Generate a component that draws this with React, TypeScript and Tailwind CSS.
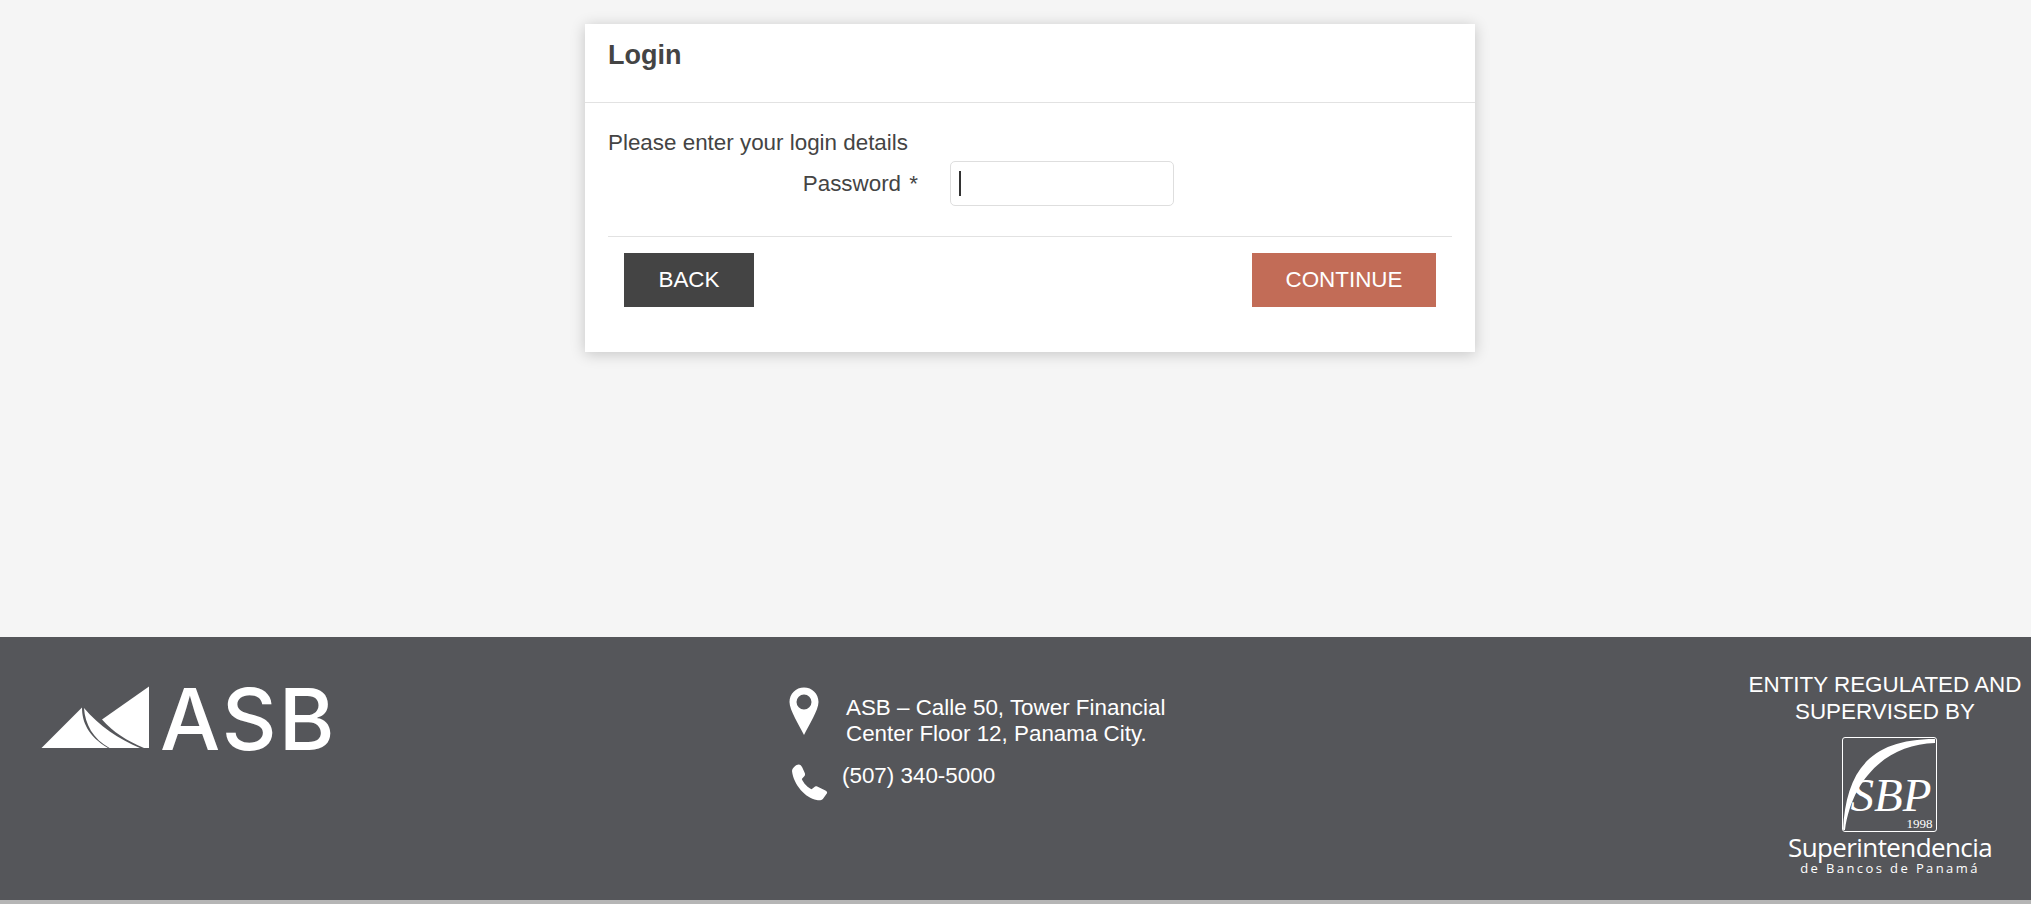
const AsbMark = () => (
  <svg width="110" height="64" viewBox="0 0 110 64" className="shrink-0">
    <path d="M0.5 62 L41 21.5 C41 36 47 50 67 62 Z" fill="#fff" />
    <path d="M43 22 C58 40 78 53 99 62 L68.5 62 C52 53 44 38 43 22 Z" fill="#fff" />
    <path d="M61 33.5 L108 0.5 L108 62 L103 62 C86 55 72 46 61 33.5 Z" fill="#fff" />
  </svg>
);

const PinIcon = () => (
  <svg width="30" height="48" viewBox="0 0 30 48" className="shrink-0">
    <path
      fillRule="evenodd"
      d="M15 0.5C6.8 0.5 0.5 6.8 0.5 15C0.5 23 10 38 15 48C20 38 29.5 23 29.5 15C29.5 6.8 23.2 0.5 15 0.5ZM15 7.5A7.5 7.5 0 1 1 15 22.5A7.5 7.5 0 1 1 15 7.5Z"
      fill="#fff"
    />
  </svg>
);

const PhoneIcon = () => (
  <svg width="37" height="37" viewBox="0 0 36 36" className="shrink-0">
    <path
      d="M1 7C1 4 5 0.5 7.5 0.5C9 0.5 10 1.5 11 3.5L13.5 9C14 10.5 13.5 11.5 12.5 12.5L10.5 14.5C12 18.5 16.5 23 20 24.5L22.5 22.5C23.5 21.5 24.5 21.5 25.5 22L33 25.5C35 26.5 35.5 27.5 35 28.5L31 34C30 35 28 35.5 25 35C14 33 2.5 20 1 7Z"
      fill="#fff"
    />
  </svg>
);

export default function App() {
  return (
    <div className="min-h-[904px] flex flex-col bg-[#f5f5f5] text-[#444] font-['Liberation_Sans',Arial,sans-serif]">
      <main className="h-[637px] pt-6">
        <div className="ml-[585px] w-[890px] h-[328px] bg-white shadow-[0_2px_14px_rgba(0,0,0,0.2)]">
          <div className="h-[79px] px-[23px] pt-[13px] border-b border-[#e2e2e2]">
            <h1 className="text-[27px] leading-[36px] font-bold">Login</h1>
          </div>
          <div className="px-[23px] pt-[24px]">
            <p className="text-[22.4px] leading-[31px]">Please enter your login details</p>
            <div className="flex items-center h-[45px] mt-[3px]">
              <label className="w-[310px] text-right text-[22.4px] leading-[31px]">
                Password <span className="ml-[2px]">*</span>
              </label>
              <div className="ml-[32px] w-[224px] h-[45px] pl-2 flex items-center border border-[#dedede] rounded-[5px] bg-white">
                <div className="w-[2px] h-[25px] bg-[#333]" />
              </div>
            </div>
            <div className="mt-[30px] border-t border-[#e2e2e2] pt-[16px] px-4 flex justify-between">
              <button className="w-[130px] h-[54px] bg-[#444444] text-white text-[22.4px] uppercase">Back</button>
              <button className="w-[184px] h-[54px] bg-[#c26c57] text-white text-[22.4px] uppercase">Continue</button>
            </div>
          </div>
        </div>
      </main>
      <footer className="h-[263px] bg-[#55565a] text-white grid grid-cols-[788px_1fr_287px]">
        <div className="pl-[41px] pt-[49px] flex items-start">
          <AsbMark />
          <span className="ml-[9px] -mt-[14px] text-[85px] leading-[96px] tracking-[2px] font-['Inter',sans-serif] font-medium">ASB</span>
        </div>
        <div className="pt-[50px]">
          <div className="flex items-start">
            <div className="ml-[1px]">
              <PinIcon />
            </div>
            <p className="ml-[27px] mt-[8px] text-[22.4px] leading-[26px]">
              ASB – Calle 50, Tower Financial
              <br />
              Center Floor 12, Panama City.
            </p>
          </div>
          <div className="flex items-start mt-[17px] ml-[3px]">
            <PhoneIcon />
            <span className="ml-[14px] -mt-[1px] text-[22.4px] leading-[26px]">(507) 340-5000</span>
          </div>
        </div>
        <div className="pt-[34px] pr-[5px] flex flex-col items-center">
          <p className="text-[22.4px] leading-[27px] text-center whitespace-nowrap">
            ENTITY REGULATED AND
            <br />
            SUPERVISED BY
          </p>
          <div className="ml-[10px] flex flex-col items-center">
            <div className="relative mt-[12px] w-[95px] h-[95px] border-[1.5px] border-white rounded-[3px] overflow-hidden">
              <svg width="92" height="92" viewBox="0 0 92 92" className="absolute inset-0">
                <path d="M0 92C3 35 25 1 92 1L92 5C45 6 9 40 2 92Z" fill="#fff" />
              </svg>
              <span className="absolute left-[7px] top-[39px] font-['Liberation_Serif',serif] italic text-[47px] leading-[36px]">SBP</span>
              <span className="absolute right-[4px] bottom-[1px] font-['Liberation_Serif',serif] text-[13px] leading-[12px]">1998</span>
            </div>
            <p className="mt-[2px] text-[26px] leading-[27px] font-['Open_Sans',sans-serif] font-medium tracking-[-0.6px] whitespace-nowrap">Superintendencia</p>
            <p className="text-[13px] leading-[14px] font-['Open_Sans',sans-serif] tracking-[2.4px] whitespace-nowrap">de Bancos de Panamá</p>
          </div>
        </div>
      </footer>
      <div className="h-[4px] bg-[#b5b5b5]" />
    </div>
  );
}
